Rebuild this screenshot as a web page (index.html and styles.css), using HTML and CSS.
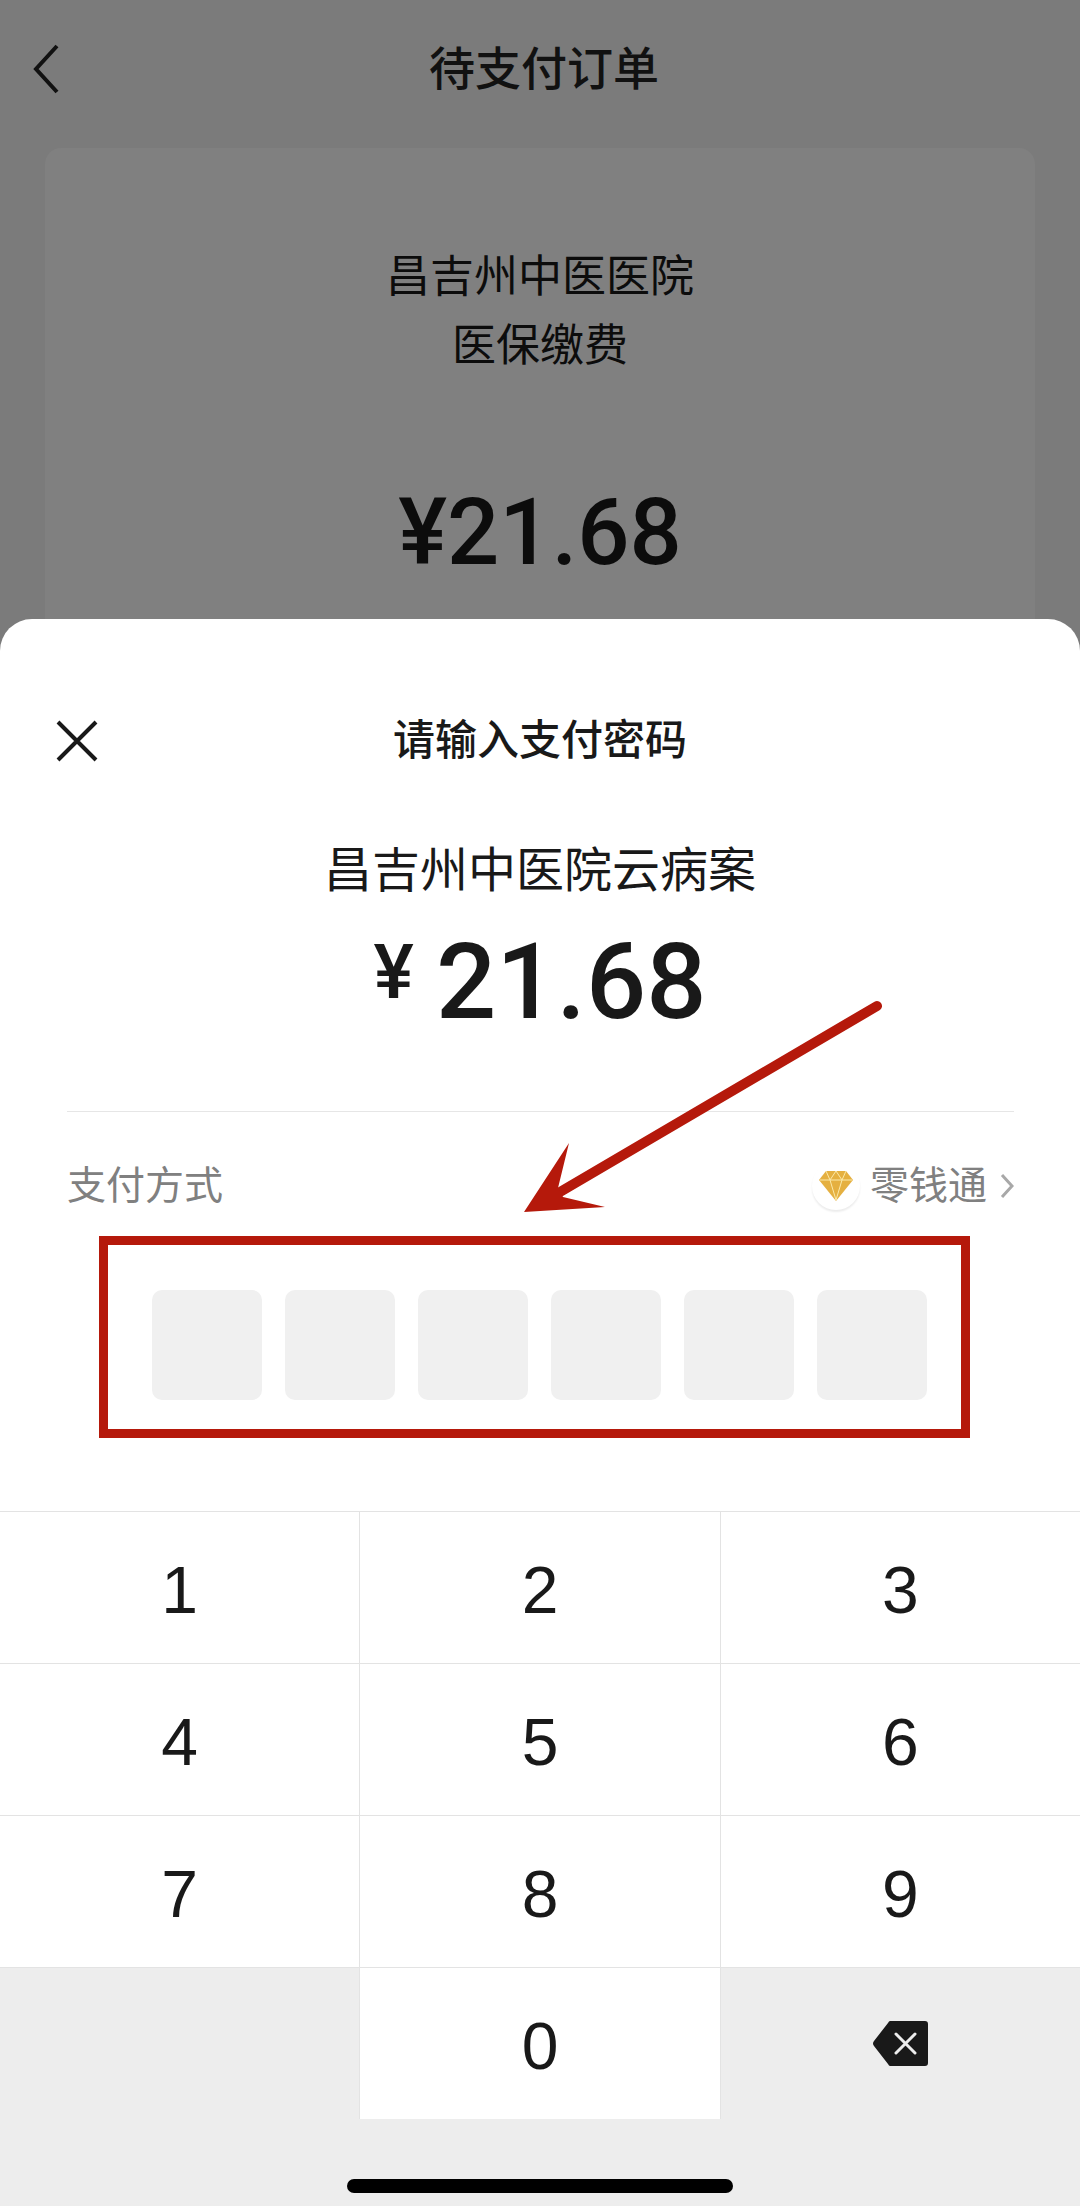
FILE: index.html
```html
<!DOCTYPE html>
<html lang="zh-CN">
<head>
<meta charset="utf-8">
<meta name="viewport" content="width=device-width, initial-scale=1">
<title>待支付订单</title>
<link rel="stylesheet" href="styles.css">
</head>
<body>
<div class="page">
  <header class="nav">
    <button class="icon-button" type="button" aria-label="返回">
      <svg width="32" height="50" viewBox="0 0 32 50"><path d="M27 2 6 25l21 23" fill="none" stroke="#111" stroke-width="4"/></svg>
    </button>
    <h1 class="nav-title">待支付订单</h1>
  </header>

  <main class="order">
    <p class="order-line">昌吉州中医医院</p>
    <p class="order-line">医保缴费</p>
    <p class="order-amount">¥21.68</p>
  </main>

  <section class="sheet" aria-labelledby="sheet-title">
    <header class="sheet-head">
      <button class="icon-button" type="button" aria-label="关闭">
        <svg width="42" height="42" viewBox="0 0 42 42"><path d="M2 2l38 38M40 2 2 40" fill="none" stroke="#191919" stroke-width="4"/></svg>
      </button>
      <h2 class="sheet-title" id="sheet-title">请输入支付密码</h2>
    </header>
    <p class="merchant">昌吉州中医院云病案</p>
    <p class="amount"><span class="currency">¥</span><span>21.68</span></p>

    <div class="method">
      <span>支付方式</span>
      <button class="method-button" type="button">
        <span class="method-badge">
          <svg width="34" height="30" viewBox="0 0 34 30">
            <path d="M7 0h20l7 9-17 21L0 9z" fill="#e5b040"/>
            <path d="M1 9h32M7 0l4 9 6-9 6 9 4-9M11 9l6 20 6-20" fill="none" stroke="#fbe9a8" stroke-width="1"/>
          </svg>
        </span>
        <span>零钱通</span>
        <svg class="method-arrow" width="14" height="24" viewBox="0 0 14 24"><path d="M2 1l10 11L2 23" fill="none" stroke="#a8a8a8" stroke-width="3"/></svg>
      </button>
    </div>

    <div class="password">
      <input class="password-cell" type="password" inputmode="numeric" maxlength="1" aria-label="密码第1位">
      <input class="password-cell" type="password" inputmode="numeric" maxlength="1" aria-label="密码第2位">
      <input class="password-cell" type="password" inputmode="numeric" maxlength="1" aria-label="密码第3位">
      <input class="password-cell" type="password" inputmode="numeric" maxlength="1" aria-label="密码第4位">
      <input class="password-cell" type="password" inputmode="numeric" maxlength="1" aria-label="密码第5位">
      <input class="password-cell" type="password" inputmode="numeric" maxlength="1" aria-label="密码第6位">
    </div>

    <svg class="pointer" width="360" height="216" viewBox="0 0 360 216" aria-hidden="true">
      <path d="M353 6 36 192" fill="none" stroke="#b5190b" stroke-width="10" stroke-linecap="round"/>
      <path d="M0 212 45 143l-11 45 5 9 42 10z" fill="#b5190b"/>
    </svg>
  </section>

  <div class="keypad">
    <button class="key" type="button">1</button>
    <button class="key" type="button">2</button>
    <button class="key" type="button">3</button>
    <button class="key" type="button">4</button>
    <button class="key" type="button">5</button>
    <button class="key" type="button">6</button>
    <button class="key" type="button">7</button>
    <button class="key" type="button">8</button>
    <button class="key" type="button">9</button>
    <span class="key-blank"></span>
    <button class="key" type="button">0</button>
    <button class="key-delete" type="button" aria-label="删除">
      <svg width="55" height="45" viewBox="0 0 55 45">
        <path d="M17 0h35q3 0 3 3v39q0 3-3 3H17q-1 0-2-2L1 25q-2-2.500 0-5L15 2q1-2 2-2z" fill="#191919"/>
        <path d="M23 13l19 19M42 13 23 32" fill="none" stroke="#ededed" stroke-width="3" stroke-linecap="round"/>
      </svg>
    </button>
  </div>
  <footer class="home"><span class="home-bar"></span></footer>
</div>
</body>
</html>
```
FILE: styles.css
```css
* {
  box-sizing: border-box;
}

body {
  margin: 0;
  background: #7b7b7b;
  color: #191919;
  font-family: "Liberation Sans", "Noto Sans CJK SC", sans-serif;
}

h1,
h2,
p {
  margin: 0;
  font-weight: 400;
}

button {
  margin: 0;
  padding: 0;
  border: 0;
  background: none;
  color: inherit;
  font: inherit;
}

svg {
  display: block;
}

.page {
  display: flex;
  flex-direction: column;
  min-height: 100vh;
}

.nav,
.sheet-head {
  display: grid;
  grid-template-columns: 96px 1fr 96px;
  align-items: center;
  text-align: center;
}

.nav {
  height: 138px;
  padding: 0 30px;
  margin-bottom: 10px;
}

.nav-title {
  padding-left: 8px;
  color: #111;
  font-size: 46px;
  line-height: 60px;
  font-weight: 500;
}

.order {
  margin: 0 45px;
  padding: 94px 0 34px;
  border-radius: 16px 16px 0 0;
  background: #808080;
  color: #0c0c0c;
  text-align: center;
}

.order-line {
  font-size: 44px;
  line-height: 69px;
}

.order-amount {
  margin-top: 101px;
  font: 500 92px/104px Roboto, sans-serif;
}

.sheet {
  position: relative;
  padding: 92px 0 73px;
  border-radius: 32px 32px 0 0;
  background: #fff;
}

.sheet-head {
  padding: 0 56px;
}

.sheet-title {
  font-size: 42px;
  line-height: 60px;
  font-weight: 500;
}

.merchant {
  margin-top: 70px;
  font-size: 48px;
  line-height: 60px;
  text-align: center;
}

.amount {
  display: flex;
  justify-content: center;
  gap: 22px;
  margin-top: 21px;
  font: 500 106px/120px Roboto, sans-serif;
}

.currency {
  font-size: 76px;
  line-height: 100px;
}

.method {
  display: flex;
  justify-content: space-between;
  align-items: center;
  margin: 69px 66px 20px 67px;
  padding-top: 44px;
  border-top: 1px solid #e6e6e6;
  color: #808080;
  font-size: 39px;
  line-height: 60px;
}

.method-button {
  display: flex;
  align-items: center;
}

.method-badge {
  display: grid;
  place-items: center;
  width: 48px;
  height: 48px;
  margin-right: 10px;
  border-radius: 50%;
  box-shadow: 0 2px 2px #ececec;
}

.method-arrow {
  margin-left: 13px;
}

.password {
  display: flex;
  gap: 23px;
  margin: 0 110px 0 99px;
  padding: 45px 34px 29px 44px;
  border: 9px solid #b5190b;
}

.password-cell {
  flex: 1;
  min-width: 0;
  aspect-ratio: 1;
  padding: 0;
  border: 0;
  border-radius: 10px;
  background: #f0f0f0;
  font-size: 48px;
  text-align: center;
}

/* Pointer lies over the amount and the payment method row */
.pointer {
  position: absolute;
  top: 381px;
  left: calc(50% - 16px);
}

.keypad {
  display: grid;
  grid-template-columns: 1fr 1fr 1fr;
  grid-auto-rows: 151px;
  gap: 1px;
  padding-top: 1px;
  background: #e3e3e3;
}

.key {
  padding-top: 5px;
  background: #fff;
  font-size: 66px;
}

.key-blank,
.key-delete {
  background: #ededed;
}

.key-delete {
  display: grid;
  place-items: center;
}

.home {
  display: flex;
  flex: 1;
  justify-content: center;
  align-items: flex-end;
  padding: 50px 0 13px;
  background: #ededed;
}

.home-bar {
  width: 386px;
  height: 14px;
  border-radius: 7px;
  background: #000;
}
```
